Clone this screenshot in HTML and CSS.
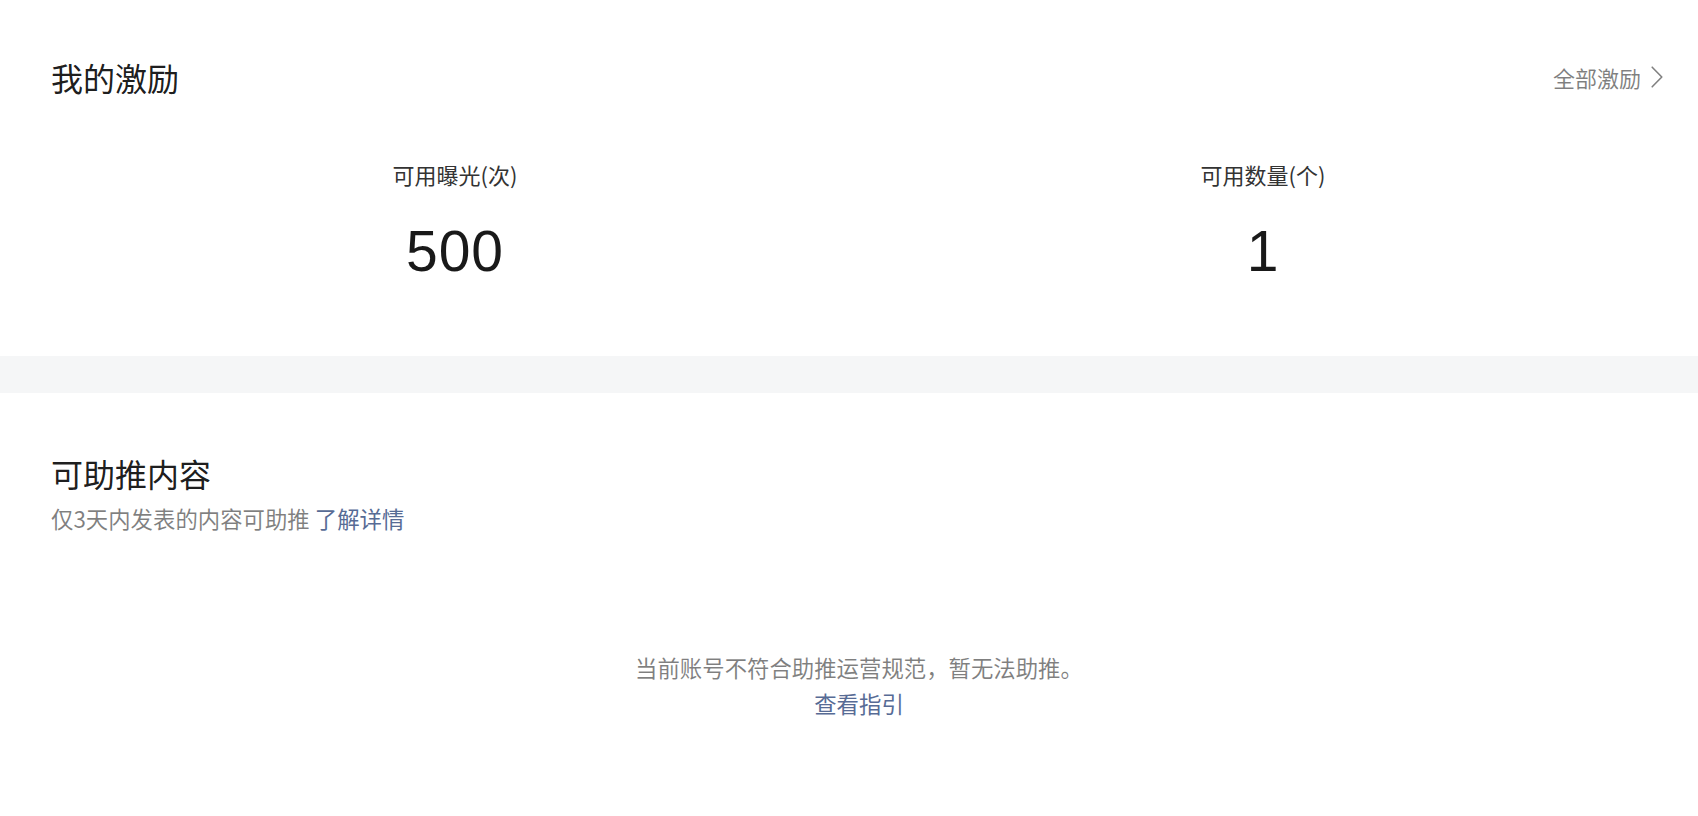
FILE: index.html
```html
<!DOCTYPE html>
<html lang="zh-CN">
<head>
<meta charset="utf-8">
<title>我的激励</title>
<link rel="stylesheet" href="styles.css">
</head>
<body>
<main class="page">
  <section class="panel panel-incentive">
    <header class="panel-head">
      <h2 class="panel-title">我的激励</h2>
      <a class="more-link" href="#">全部激励<svg class="chevron" width="12" height="22" viewBox="0 0 12 22" aria-hidden="true"><polyline points="1.2,1.2 10.8,11 1.2,20.8" fill="none" stroke="currentColor" stroke-width="1.6" stroke-linecap="round" stroke-linejoin="round"/></svg></a>
    </header>
    <div class="stats">
      <div class="stat">
        <div class="stat-label">可用曝光(次)</div>
        <div class="stat-value">500</div>
      </div>
      <div class="stat">
        <div class="stat-label">可用数量(个)</div>
        <div class="stat-value">1</div>
      </div>
    </div>
  </section>
  <div class="divider"></div>
  <section class="panel panel-content">
    <h2 class="panel-title">可助推内容</h2>
    <p class="panel-desc">仅3天内发表的内容可助推 <a class="link" href="#">了解详情</a></p>
    <div class="empty">
      <p class="empty-text">当前账号不符合助推运营规范，暂无法助推。</p>
      <a class="link empty-link" href="#">查看指引</a>
    </div>
  </section>
</main>
</body>
</html>
```

FILE: styles.css
```css
html, body {
  margin: 0;
  padding: 0;
  background: #ffffff;
}

body {
  font-family: "Noto Sans CJK SC", "Noto Sans", sans-serif;
  color: rgba(0, 0, 0, 0.9);
}

a {
  text-decoration: none;
}

.page {
  display: flex;
  flex-direction: column;
}

.panel {
  padding: 0 31px 0 51px;
}

.panel-incentive {
  padding-top: 55px;
  padding-bottom: 73px;
}

.panel-head {
  display: flex;
  align-items: center;
  justify-content: space-between;
  margin-right: 4px;
}

.panel-title {
  margin: 0;
  font-size: 32px;
  line-height: 44px;
  font-weight: 400;
  color: rgba(0, 0, 0, 0.9);
}

.more-link {
  display: flex;
  align-items: center;
  gap: 10px;
  font-size: 22px;
  line-height: 30px;
  color: rgba(0, 0, 0, 0.5);
}

.chevron {
  display: block;
  color: #808080;
}

.stats {
  display: grid;
  grid-template-columns: 1fr 1fr;
  margin-top: 60px;
}

.stat {
  display: flex;
  flex-direction: column;
  align-items: center;
  gap: 30px;
}

.stat-label {
  font-size: 22px;
  line-height: 30px;
  color: #333333;
}

.stat-value {
  font-family: "Liberation Sans", "Noto Sans CJK SC", sans-serif;
  font-size: 57px;
  line-height: 64px;
  letter-spacing: 1px;
  color: rgba(0, 0, 0, 0.9);
}

.divider {
  height: 37px;
  background: #f5f6f7;
}

.panel-content {
  padding-top: 58px;
  padding-bottom: 95px;
}

.panel-desc {
  margin: 8px 0 0;
  font-size: 22.4px;
  line-height: 30px;
  color: rgba(0, 0, 0, 0.5);
}

.link {
  color: #576b95;
}

.empty {
  margin-top: 116px;
  display: flex;
  flex-direction: column;
  align-items: center;
  font-size: 22.4px;
  line-height: 36px;
}

.empty-text {
  margin: 0;
  color: rgba(0, 0, 0, 0.5);
}
```
